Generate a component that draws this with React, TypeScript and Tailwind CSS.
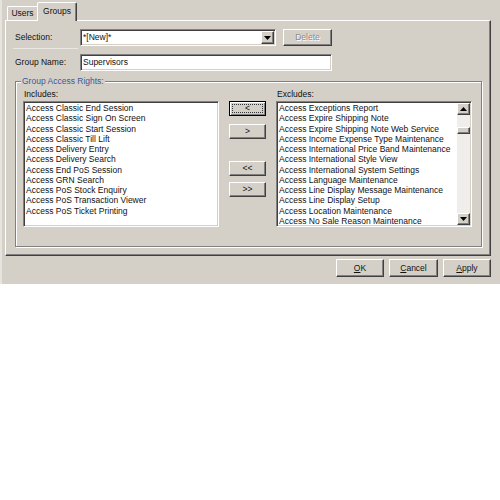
import { ReactNode } from 'react'

const includes = [
  'Access Classic End Session',
  'Access Classic Sign On Screen',
  'Access Classic Start Session',
  'Access Classic Till Lift',
  'Access Delivery Entry',
  'Access Delivery Search',
  'Access End PoS Session',
  'Access GRN Search',
  'Access PoS Stock Enquiry',
  'Access PoS Transaction Viewer',
  'Access PoS Ticket Printing',
]

const excludes = [
  'Access Exceptions Report',
  'Access Expire Shipping Note',
  'Access Expire Shipping Note Web Service',
  'Access Income Expense Type Maintenance',
  'Access International Price Band Maintenance',
  'Access International Style View',
  'Access International System Settings',
  'Access Language Maintenance',
  'Access Line Display Message Maintenance',
  'Access Line Display Setup',
  'Access Location Maintenance',
  'Access No Sale Reason Maintenance',
]

const raised =
  'border border-t-white border-l-white border-r-[#404040] border-b-[#404040] shadow-[inset_-1px_-1px_0_#808080] bg-[#d4d0c8]'
const sunken =
  'border border-t-[#808080] border-l-[#808080] border-r-white border-b-white shadow-[inset_1px_1px_0_#404040,inset_-1px_-1px_0_#d4d0c8] bg-white'

function Arrow({ up }: { up?: boolean }) {
  return (
    <svg width="7" height="4" viewBox="0 0 7 4">
      <polygon points={up ? '3.5,0 7,4 0,4' : '0,0 7,0 3.5,4'} fill="#000" />
    </svg>
  )
}

function Btn({
  children,
  className,
  isDefault,
  disabled,
}: {
  children: ReactNode
  className: string
  isDefault?: boolean
  disabled?: boolean
}) {
  if (isDefault) {
    return (
      <div
        className={`flex border border-black bg-[#d4d0c8] shadow-[inset_1px_1px_0_#fff,inset_-1px_-1px_0_#808080] ${className}`}
      >
        <div className="m-[2px] flex flex-1 items-center justify-center border border-dotted border-[#333]">
          {children}
        </div>
      </div>
    )
  }
  return (
    <div
      className={`flex items-center justify-center ${raised} ${className} ${
        disabled ? 'text-[#8a8a8a] [text-shadow:1px_1px_0_#fff]' : ''
      }`}
    >
      {children}
    </div>
  )
}

function ListBox({ items, scroll }: { items: string[]; scroll?: boolean }) {
  return (
    <div className={`flex h-[126px] w-[196px] ${sunken}`}>
      <div className="flex-1 overflow-hidden pl-[2px] pt-[1px]">
        {items.map((item) => (
          <div key={item} className="h-[10.25px] whitespace-nowrap leading-[10.25px]">
            {item}
          </div>
        ))}
      </div>
      {scroll && (
        <div className="my-[1px] mr-[1px] flex w-[13px] flex-col bg-[#efeeea]">
          <div className={`flex h-[12px] items-center justify-center ${raised}`}>
            <Arrow up />
          </div>
          <div className="flex-1">
            <div className={`mt-[12px] h-[7px] ${raised}`} />
          </div>
          <div className={`flex h-[12px] items-center justify-center ${raised}`}>
            <Arrow />
          </div>
        </div>
      )}
    </div>
  )
}

export default function App() {
  return (
    <div className="h-[284px] w-[500px] border-l-2 border-l-[#e6e4df] bg-[#d4d0c8] pl-[3px] pr-[9px] pt-[2px] font-['Liberation_Sans',Arial,sans-serif] text-[8.5px] text-[#111]">
      {/* tabs */}
      <div className="flex h-[18px] items-end pl-[2px]">
        <div className="flex h-[14px] w-[30px] items-center justify-center rounded-tl-[2px] border-l border-t border-l-white border-t-white">
          Users
        </div>
        <div className="relative z-10 mb-[-1px] flex h-[19px] w-[40px] items-center justify-center rounded-t-[2px] border-l border-r border-t border-l-white border-r-[#404040] border-t-white bg-[#d4d0c8] pb-[1px] shadow-[inset_-1px_0_0_#808080]">
          Groups
        </div>
      </div>

      {/* tab panel */}
      <div className="h-[236px] border border-b-[#404040] border-l-white border-r-[#404040] border-t-white shadow-[inset_-1px_-1px_0_#808080]">
        <div className="mt-[8px] flex h-[17px] items-center pl-[9px]">
          <div className="w-[65px]">Selection:</div>
          <div className={`flex h-[17px] w-[196px] items-center ${sunken}`}>
            <div className="flex-1 pl-[2px]">*[New]*</div>
            <div className={`mr-[1px] flex h-[13px] w-[13px] items-center justify-center ${raised}`}>
              <Arrow />
            </div>
          </div>
          <Btn disabled className="ml-[7px] h-[17px] w-[49px]">
            Delete
          </Btn>
        </div>

        <div className="ml-[7px] mt-[2px] h-px w-[65px] bg-[#e9e7e2]" />

        <div className="mt-[5px] flex h-[17px] items-center pl-[9px]">
          <div className="w-[65px]">Group Name:</div>
          <div className={`flex h-[17px] w-[252px] items-center pl-[2px] ${sunken}`}>Supervisors</div>
        </div>

        {/* group box */}
        <div className="relative ml-[9px] mt-[10px] h-[166px] w-[467px] border border-[#808080] shadow-[inset_1px_1px_0_#fff,1px_1px_0_#fff]">
          <span className="absolute left-[5px] top-[-6px] bg-[#d4d0c8] px-[1px] leading-[10px] text-[#3d5898]">
            Group Access Rights:
          </span>
          <div className="grid grid-cols-[196px_37px_196px] gap-x-[10px] pl-[7px] pt-[7px]">
            <div className="mb-[2px] h-[10px] pl-[1px] leading-[10px]">Includes:</div>
            <div />
            <div className="mb-[2px] h-[10px] pl-[1px] leading-[10px]">Excludes:</div>

            <ListBox items={includes} />
            <div className="flex flex-col">
              <Btn isDefault className="h-[15px] w-[37px]">
                &lt;
              </Btn>
              <Btn className="mt-[8px] h-[15px] w-[37px]">&gt;</Btn>
              <Btn className="mt-[22px] h-[15px] w-[37px]">&lt;&lt;</Btn>
              <Btn className="mt-[6px] h-[15px] w-[37px]">&gt;&gt;</Btn>
            </div>
            <ListBox items={excludes} scroll />
          </div>
        </div>
      </div>

      {/* dialog buttons */}
      <div className="mt-[3px] flex justify-end gap-[5px]">
        <Btn className="h-[18px] w-[48px]">
          <span className="underline">O</span>K
        </Btn>
        <Btn className="h-[18px] w-[49px]">
          <span className="underline">C</span>ancel
        </Btn>
        <Btn className="h-[18px] w-[48px]">
          <span className="underline">A</span>pply
        </Btn>
      </div>
    </div>
  )
}
